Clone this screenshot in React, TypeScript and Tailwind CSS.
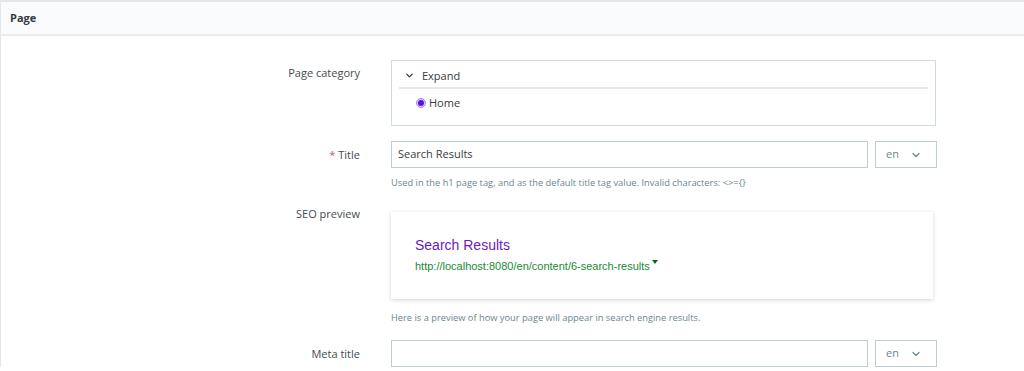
import { ChevronDown } from "lucide-react";

const font = { fontFamily: '"Open Sans", "Noto Sans", sans-serif' };

function LangSelect() {
  return (
    <div className="w-[62px] h-[27px] border border-[#bbcdd2] flex items-center justify-between pl-[10px] pr-[14px] text-[11px] text-[#6c868e]">
      <span>en</span>
      <ChevronDown size={12} strokeWidth={2.5} className="text-[#6c868e]" />
    </div>
  );
}

function Label({ children, className = "" }: { children: React.ReactNode; className?: string }) {
  return (
    <div className={"w-[359px] shrink-0 text-right text-[11px] leading-[16px] text-[#464b50] " + className}>{children}</div>
  );
}

export default function App() {
  return (
    <div className="w-[1024px] h-[371px] overflow-hidden bg-white" style={font}>
      <div className="w-[1040px] border-t-2 border-l border-[#e3e7ea] bg-white">
        {/* header */}
        <div className="h-[34px] bg-[#fafbfc] border-b-2 border-[#e9edf0] flex items-center pl-[9px]">
          <span className="text-[11px] font-bold text-[#363a41]">Page</span>
        </div>

        <div className="pt-[24px]">
          {/* page category */}
          <div className="flex">
            <Label className="pt-[5px]">Page category</Label>
            <div className="ml-[31px] w-[545px] h-[66px] border border-[#cfdde1] px-[7px]">
              <div className="h-[28px] border-b-2 border-[#e3e9ec] flex items-end pb-[4px] pl-[5px] gap-[7px]">
                <ChevronDown size={11} strokeWidth={3} className="text-[#363a41] mb-[2px]" />
                <span className="text-[11px] text-[#363a41] leading-[14px]">Expand</span>
              </div>
              <div className="flex items-center gap-[3px] pl-[17px] pt-[7px]">
                <span className="w-[10px] h-[10px] rounded-full border border-[#9b8cf5] bg-[#d6d0fc] flex items-center justify-center">
                  <span className="w-[6px] h-[6px] rounded-full bg-[#5b0fe6]" />
                </span>
                <span className="text-[11px] text-[#363a41] leading-[14px]">Home</span>
              </div>
            </div>
          </div>

          {/* title */}
          <div className="flex mt-[15px]">
            <Label className="pt-[6px]">
              <span className="text-[#c05c67]">*</span> Title
            </Label>
            <div className="ml-[31px]">
              <div className="flex gap-[7px]">
                <div className="w-[477px] h-[27px] border border-[#bbcdd2] flex items-center px-[6px] text-[11px] text-[#363a41]">
                  Search Results
                </div>
                <LangSelect />
              </div>
              <div className="mt-[8px] text-[9.3px] text-[#6c868e] leading-[14px]">
                Used in the h1 page tag, and as the default title tag value. Invalid characters: &lt;&gt;={"{}"}
              </div>
            </div>
          </div>

          {/* seo preview */}
          <div className="flex mt-[22px]">
            <Label className="-mt-[6px]">SEO preview</Label>
            <div className="ml-[31px]">
              <div
                className="w-[542px] h-[87px] bg-white shadow-[0_1px_4px_rgba(0,0,0,0.18)] pl-[24px] pt-[24px]"
                style={{ fontFamily: '"Liberation Sans", Arial, sans-serif' }}
              >
                <div className="text-[14px] leading-[18px] text-[#6a1bc0]">Search Results</div>
                <div className="mt-[5px] flex items-start gap-[2px] text-[11px] leading-[14px] text-[#1a8a35]">
                  <span>http://localhost:8080/en/content/6-search-results</span>
                  <span className="mt-[1px] w-0 h-0 border-l-[3.5px] border-r-[3.5px] border-t-[4px] border-l-transparent border-r-transparent border-t-[#006621]" />
                </div>
              </div>
              <div className="mt-[12px] text-[9.3px] text-[#6c868e] leading-[14px]">
                Here is a preview of how your page will appear in search engine results.
              </div>
            </div>
          </div>

          {/* meta title */}
          <div className="flex mt-[15px]">
            <Label className="pt-[6px]">Meta title</Label>
            <div className="ml-[31px] flex gap-[7px]">
              <div className="w-[477px] h-[27px] border border-[#bbcdd2]" />
              <LangSelect />
            </div>
          </div>
        </div>
      </div>
    </div>
  );
}
